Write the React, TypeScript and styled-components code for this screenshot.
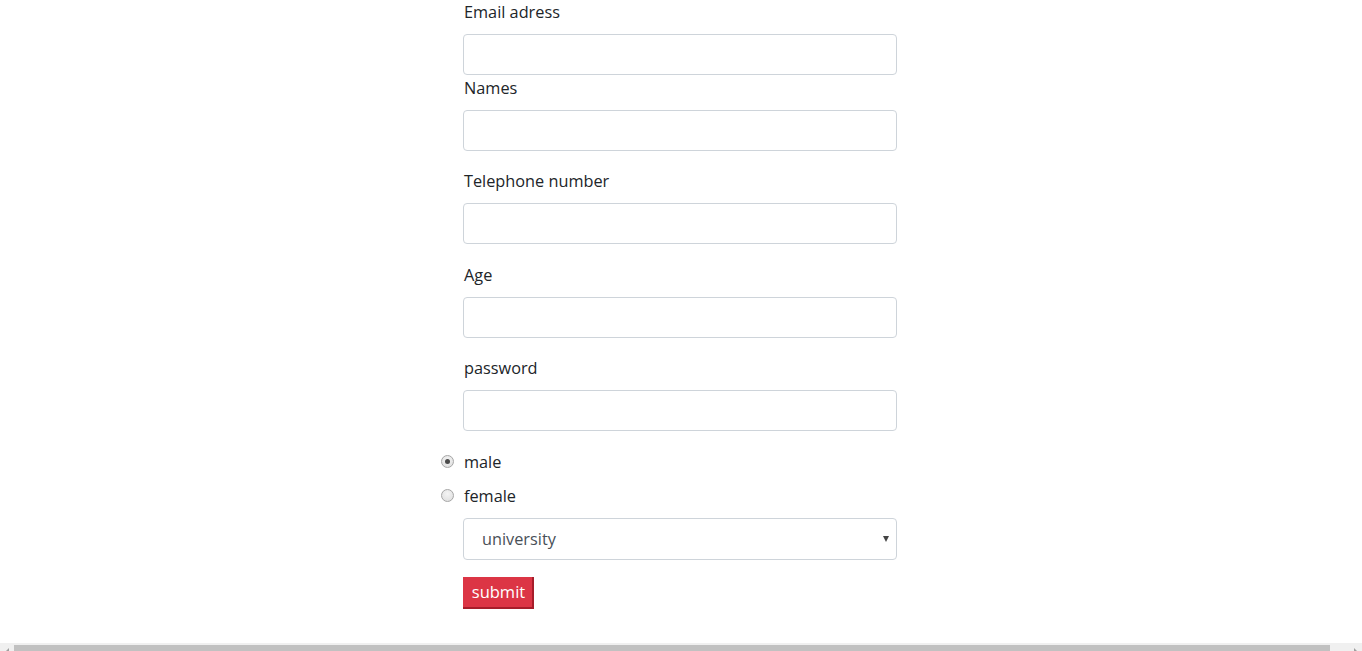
import React from "react";
import styled, { createGlobalStyle } from "styled-components";

const Global = createGlobalStyle`
  html, body { margin: 0; padding: 0; background: #fff; overflow: hidden; }
  body { font-family: "Open Sans", "Noto Sans", sans-serif; color: #212529; }
  * { box-sizing: border-box; }
`;

const Page = styled.div`
  width: 1362px;
  height: 651px;
  display: flex;
  justify-content: center;
  position: relative;
`;

const Form = styled.form`
  width: 434px;
  margin-top: -1.5px;
  margin-left: -2px;
  display: flex;
  flex-direction: column;
`;

const Group = styled.div<{ $spaced?: boolean }>`
  display: flex;
  flex-direction: column;
  margin-bottom: ${(p) => (p.$spaced ? "17.5px" : "0")};
`;

const Label = styled.label`
  font-size: 16.3px;
  line-height: 26.4px;
  margin: 0 0 8.6px 1px;
  color: #212529;
`;

const Input = styled.input`
  width: 100%;
  height: 41px;
  border: 1px solid #ced4da;
  border-radius: 4px;
  background: #fff;
  padding: 6px 13px;
  font-family: inherit;
  font-size: 16.3px;
  outline: none;
`;

const Check = styled.div`
  display: flex;
  align-items: center;
  height: 26.4px;
  margin-bottom: 8.4px;
  position: relative;
`;

const Radio = styled.input.attrs({ type: "radio" })`
  appearance: none;
  position: absolute;
  left: -22px;
  top: 6px;
  width: 13px;
  height: 13px;
  margin: 0;
  border-radius: 50%;
  border: 1px solid #a6a6a6;
  background: radial-gradient(circle at 50% 35%, #f4f4f4 0%, #dcdcdc 100%);
  display: grid;
  place-items: center;
  &:checked::after {
    content: "";
    width: 5px;
    height: 5px;
    border-radius: 50%;
    background: #4a4a4a;
  }
`;

const CheckLabel = styled.label`
  font-size: 16.3px;
  line-height: 26.4px;
  margin-left: 1px;
  color: #212529;
`;

const SelectWrap = styled.div`
  position: relative;
  margin-bottom: 17.6px;
`;

const Select = styled.select`
  appearance: none;
  width: 100%;
  height: 41.8px;
  border: 1px solid #ced4da;
  border-radius: 4px;
  background: #fff;
  padding: 0 30px 0 18px;
  font-family: inherit;
  font-size: 16.3px;
  color: #495057;
  outline: none;
`;

const Caret = styled.span`
  position: absolute;
  right: 8px;
  top: 18px;
  width: 0;
  height: 0;
  border-left: 3px solid transparent;
  border-right: 3px solid transparent;
  border-top: 6px solid #444;
  pointer-events: none;
`;

const SubmitRow = styled.div`
  display: flex;
`;

const Submit = styled.button`
  background: #dc3545;
  color: #fff;
  font-family: inherit;
  font-size: 16.5px;
  line-height: 24px;
  padding: 3px 6px 3px 8px;
  border: 0;
  border-right: 2px solid #a71d2a;
  border-bottom: 2px solid #a71d2a;
  border-radius: 0;
  height: 32px;
  width: 71px;
`;

const Scrollbar = styled.div`
  position: fixed;
  left: 0;
  right: 0;
  bottom: 0;
  height: 8px;
  background: #f0f0f0;
  display: flex;
  align-items: flex-end;
`;

const ScrollArrow = styled.div<{ $dir: "l" | "r" }>`
  width: 14px;
  height: 6px;
  display: flex;
  justify-content: center;
  align-items: flex-end;
  &::after {
    content: "";
    width: 0;
    height: 0;
    border-bottom: 3px solid #a0a0a0;
    ${(p) =>
      p.$dir === "l"
        ? "border-left: 3px solid transparent;"
        : "border-right: 3px solid transparent;"}
  }
`;

const Thumb = styled.div`
  flex: 1;
  height: 6px;
  background: #c1c1c1;
  margin-right: 18px;
`;

export default function App() {
  const fields: { label: string; type: string; spaced: boolean }[] = [
    { label: "Email adress", type: "email", spaced: false },
    { label: "Names", type: "text", spaced: true },
    { label: "Telephone number", type: "tel", spaced: true },
    { label: "Age", type: "text", spaced: true },
    { label: "password", type: "password", spaced: true },
  ];
  return (
    <Page>
      <Global />
      <Form onSubmit={(e) => e.preventDefault()}>
        {fields.map((f) => (
          <Group key={f.label} $spaced={f.spaced}>
            <Label>{f.label}</Label>
            <Input type={f.type} />
          </Group>
        ))}
        <Check>
          <Radio name="gender" id="male" defaultChecked />
          <CheckLabel htmlFor="male">male</CheckLabel>
        </Check>
        <Check>
          <Radio name="gender" id="female" />
          <CheckLabel htmlFor="female">female</CheckLabel>
        </Check>
        <SelectWrap>
          <Select defaultValue="university">
            <option value="university">university</option>
            <option value="college">college</option>
            <option value="highschool">high school</option>
          </Select>
          <Caret />
        </SelectWrap>
        <SubmitRow>
          <Submit type="submit">submit</Submit>
        </SubmitRow>
      </Form>
      <Scrollbar>
        <ScrollArrow $dir="l" />
        <Thumb />
        <ScrollArrow $dir="r" />
      </Scrollbar>
    </Page>
  );
}
